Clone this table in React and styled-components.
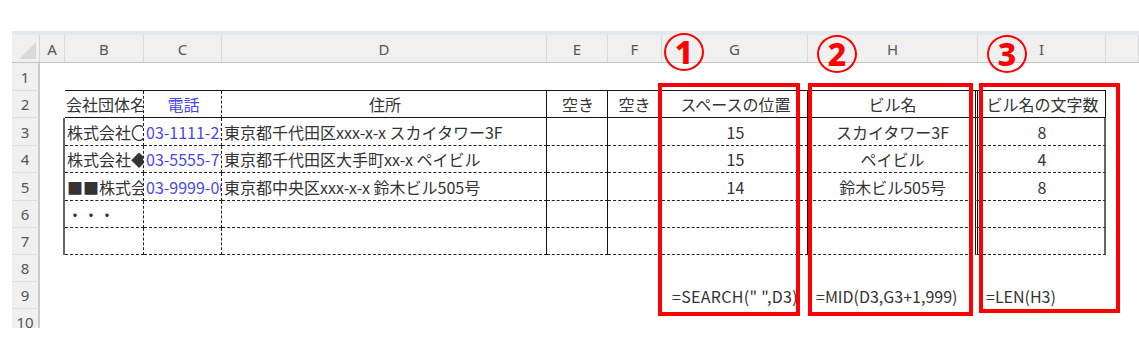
import React from 'react';
import styled, { createGlobalStyle } from 'styled-components';

const GlobalStyle = createGlobalStyle`
  body {
    margin: 0;
    background: #fff;
    font-family: "Noto Sans CJK JP", "Noto Sans", sans-serif;
  }
`

const COLS = '28px 25px 79px 78px 325px 61px 54px 146px 170px 128px 1fr';

const SOLID = '1px solid #111';
const DASH = '1px dashed #222';
const DOUBLE = '3px double #111';
const EDGE = '2px solid #666';

const Page = styled.div`
  position: relative;
  width: 1139px;
  height: 357px;
  padding: 31px 0 0 12px;
  box-sizing: border-box;
  overflow: hidden;
`

const Sheet = styled.div`
  height: 297px;
  overflow: hidden;
  display: flex;
  flex-direction: column;
`

const HeaderRow = styled.div`
  display: grid;
  grid-template-columns: ${COLS};
  height: 32px;
  flex: none;
  box-sizing: border-box;
  background: #f0f0f0;
  border-top: 4px solid #e4e9ee;
  border-bottom: 1px solid #c4c4c4;
`

const Corner = styled.div`
  display: flex;
  justify-content: flex-end;
  align-items: flex-end;
  padding: 0 3px 3px 0;
  border-right: 1px solid #d6d6d6;
`

const Triangle = styled.div`
  width: 17px;
  height: 17px;
  background: #d9d9d9;
  clip-path: polygon(100% 0, 100% 100%, 0 100%);
`

const ColLetter = styled.div`
  display: flex;
  align-items: center;
  justify-content: center;
  border-right: 1px solid #dadada;
  color: #555;
  font-family: "Noto Sans", sans-serif;
  font-size: 15px;
`

const Row = styled.div`
  display: grid;
  grid-template-columns: ${COLS};
  height: ${p => p.$h}px;
  flex: none;
`

const RowNum = styled.div`
  display: flex;
  align-items: center;
  justify-content: center;
  background: #f0f0f0;
  border-right: 2px solid #cbcbcb;
  border-bottom: 1px solid #dedede;
  box-sizing: border-box;
  color: #555;
  font-family: "Noto Sans", sans-serif;
  font-size: 15px;
`

const Cell = styled.div`
  display: flex;
  align-items: center;
  justify-content: ${p => p.$align || 'flex-start'};
  box-sizing: border-box;
  min-width: 0;
  overflow: hidden;
  white-space: nowrap;
  padding: 0 ${p => p.$align === 'center' ? 0 : 2}px 0 ${p => p.$pad ?? 2}px;
  border-right: ${p => p.$right || 'none'};
  border-bottom: ${p => p.$bottom || 'none'};
  color: ${p => p.$blue ? '#4848ec' : '#333'};
  font-size: 16px;
  letter-spacing: ${p => p.$wide ? '0.3px' : 'normal'};
`

const RedBox = styled.div`
  position: absolute;
  left: ${p => p.$x}px;
  top: ${p => p.$y}px;
  width: ${p => p.$w}px;
  height: ${p => p.$h}px;
  box-sizing: border-box;
  border: 4px solid #ff0000;
`

const Circled = styled.div`
  position: absolute;
  left: ${p => p.$x}px;
  top: ${p => p.$y}px;
  width: 40px;
  height: 38px;
  box-sizing: border-box;
  border: 2.5px solid #ff0000;
  border-radius: 50%;
  display: flex;
  align-items: center;
  justify-content: center;
  color: #ff0000;
  font-family: "Noto Sans", sans-serif;
  font-weight: 800;
  font-size: 32px;
  line-height: 1;
`

const letters = ['A', 'B', 'C', 'D', 'E', 'F', 'G', 'H', 'I', ''];

// right border of each column (A..J) inside the table
const rightHead = [null, DASH, DASH, SOLID, SOLID, DOUBLE, SOLID, DOUBLE, SOLID, null];
const rightBody = [EDGE, DASH, DASH, SOLID, SOLID, DOUBLE, SOLID, DOUBLE, EDGE, null];

const heights = [28, 27, 28, 27, 28, 27, 27, 27, 27, 27];

const C = (text, opts = {}) => ({ text, ...opts });
const mid = t => C(t, { align: 'center' });

const data = [
  [],
  [null, C('会社団体名', { pad: 1 }), C('電話', { align: 'center', blue: true }), mid('住所'), mid('空き'), mid('空き'), mid('スペースの位置'), mid('ビル名'), mid('ビル名の文字数')],
  [null, C('株式会社〇〇'), C('03-1111-2222', { blue: true }), C('東京都千代田区xxx-x-x スカイタワー3F'), null, null, mid('15'), mid('スカイタワー3F'), mid('8')],
  [null, C('株式会社◆◆'), C('03-5555-7777', { blue: true }), C('東京都千代田区大手町xx-x ペイビル'), null, null, mid('15'), mid('ペイビル'), mid('4')],
  [null, C('■■株式会社'), C('03-9999-0000', { blue: true }), C('東京都中央区xxx-x-x 鈴木ビル505号'), null, null, mid('14'), mid('鈴木ビル505号'), mid('8')],
  [null, C('・・・')],
  [],
  [],
  [null, null, null, null, null, null, C('=SEARCH(" ",D3)', { pad: 10, wide: true }), C('=MID(D3,G3+1,999)', { pad: 8 }), C('=LEN(H3)', { pad: 8 })],
  [],
];

function borders(r, c) {
  const inTable = c >= 1 && c <= 8;
  if (r === 0) return { bottom: inTable ? SOLID : null, right: null };
  if (r === 1) return { bottom: inTable ? SOLID : null, right: rightHead[c] };
  if (r >= 2 && r <= 6) return { bottom: inTable ? DASH : null, right: rightBody[c] };
  return { bottom: null, right: null };
}

function SheetRow({ index }) {
  const cells = data[index];
  return (
    <Row $h={heights[index]}>
      <RowNum>{index + 1}</RowNum>
      {letters.map((_, c) => {
        const cell = cells[c];
        const b = borders(index, c);
        return (
          <Cell
            key={c}
            $right={b.right}
            $bottom={b.bottom}
            $align={cell && cell.align === 'center' ? 'center' : null}
            $blue={cell && cell.blue}
            $wide={cell && cell.wide}
            $pad={cell && cell.pad != null ? cell.pad : 2}
          >
            {cell ? cell.text : ''}
          </Cell>
        );
      })}
    </Row>
  );
}

export default function App() {
  return (
    <Page>
      <GlobalStyle />
      <Sheet>
        <HeaderRow>
          <Corner><Triangle /></Corner>
          {letters.map((l, i) => <ColLetter key={i}>{l}</ColLetter>)}
        </HeaderRow>
        {data.map((_, i) => <SheetRow key={i} index={i} />)}
      </Sheet>

      <RedBox $x={658} $y={83} $w={142} $h={233} />
      <RedBox $x={808} $y={83} $w={165} $h={233} />
      <RedBox $x={979} $y={83} $w={141} $h={230} />

      <Circled $x={664} $y={33}>1</Circled>
      <Circled $x={817} $y={35}>2</Circled>
      <Circled $x={987} $y={35}>3</Circled>
    </Page>
  );
}
